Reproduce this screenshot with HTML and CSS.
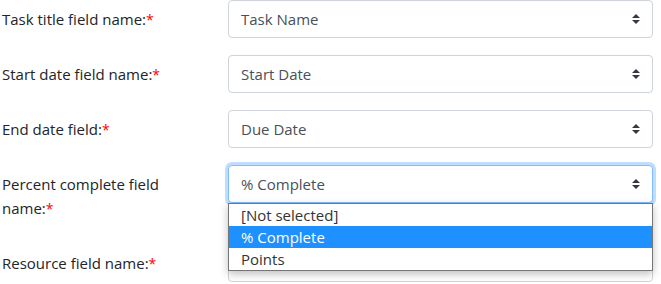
FILE: index.html
```html
<!DOCTYPE html>
<html lang="en">
<head>
    <meta charset="UTF-8">
    <meta name="viewport" content="width=device-width, initial-scale=1.0">
    <title>Field mapping</title>
    <link rel="stylesheet" href="styles.css">
</head>
<body>

    <form class="mapping-form">
        <div class="form-row">
            <label class="field-label">Task title field name:<span class="req">*</span></label>
            <div class="select-box">
                <span class="select-value">Task Name</span>
                <svg class="select-arrow" width="8" height="10" viewBox="0 0 4 5"><path fill="#343a40" d="M2 0L0 2h4zm0 5L0 3h4z"/></svg>
            </div>
        </div>

        <div class="form-row">
            <label class="field-label">Start date field name:<span class="req">*</span></label>
            <div class="select-box">
                <span class="select-value">Start Date</span>
                <svg class="select-arrow" width="8" height="10" viewBox="0 0 4 5"><path fill="#343a40" d="M2 0L0 2h4zm0 5L0 3h4z"/></svg>
            </div>
        </div>

        <div class="form-row">
            <label class="field-label">End date field:<span class="req">*</span></label>
            <div class="select-box">
                <span class="select-value">Due Date</span>
                <svg class="select-arrow" width="8" height="10" viewBox="0 0 4 5"><path fill="#343a40" d="M2 0L0 2h4zm0 5L0 3h4z"/></svg>
            </div>
        </div>

        <div class="form-row">
            <label class="field-label">Percent complete field name:<span class="req">*</span></label>
            <div class="select-wrap">
                <div class="select-box focused">
                    <span class="select-value">% Complete</span>
                    <svg class="select-arrow" width="8" height="10" viewBox="0 0 4 5"><path fill="#343a40" d="M2 0L0 2h4zm0 5L0 3h4z"/></svg>
                </div>
                <!-- open dropdown -->
                <ul class="option-list">
                    <li>[Not selected]</li>
                    <li class="selected">% Complete</li>
                    <li>Points</li>
                </ul>
            </div>
        </div>

        <div class="form-row">
            <label class="field-label">Resource field name:<span class="req">*</span></label>
            <!-- hidden behind the open list -->
            <div class="select-box"></div>
        </div>
    </form>

</body>
</html>
```

FILE: styles.css
```css
body {
    font-family: 'Open Sans', 'Noto Sans', sans-serif;
    font-size: 15px;
    line-height: 24px;
    color: #212529;
    background-color: #ffffff;
    margin: 0;
    padding: 0;
    overflow: hidden;
}
.mapping-form {
    margin: 0;
    padding: 0;
}
.form-row {
    display: grid;
    grid-template-columns: 228px 425px;
    align-items: start;
    margin-bottom: 17px;
}
.form-row:last-child {
    margin-bottom: 0;
}
.field-label {
    display: block;
    height: auto;
    padding: 7px 16px 7px 2px;
}
.req {
    color: #ff0000;
    font-size: 14px;
    line-height: 0;
}
.select-wrap {
    position: relative;
}
.select-box {
    height: 38px;
    box-sizing: border-box;
    border: 1px solid #ced4da;
    border-radius: 4px;
    background-color: #fff;
    padding: 0 12px;
    display: flex;
    align-items: center;
    justify-content: space-between;
    color: #495057;
}
.select-box.focused {
    border-color: #80bdff;
    box-shadow: 0 0 0 3px rgba(0, 123, 255, 0.25);
}
.select-arrow {
    display: block;
    flex-shrink: 0;
}
.option-list {
    position: absolute;
    top: 38px;
    left: 0;
    right: 0;
    margin: 0;
    padding: 0;
    list-style: none;
    background-color: #fff;
    border: 1px solid #767676;
    box-shadow: 0 3px 8px rgba(0, 0, 0, 0.25);
    color: #333;
    z-index: 5;
}
.option-list li {
    height: 22px;
    line-height: 22px;
    padding-left: 12px;
}
.option-list li.selected {
    background-color: #1e90ff;
    color: #fff;
}
```
